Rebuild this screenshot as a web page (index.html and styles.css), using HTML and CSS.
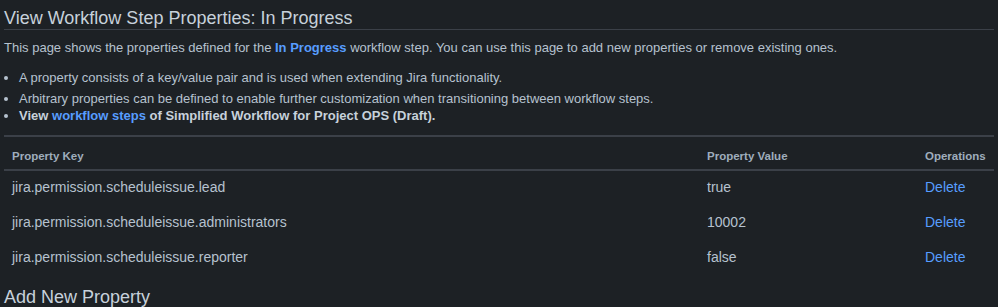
FILE: index.html
```html
<!DOCTYPE html>
<html>
<head>
  <title>View Workflow Step Properties</title>
  <meta charset="utf-8" />
  <link rel="stylesheet" href="styles.css">
</head>
<body>
  <h2 class="page-title">View Workflow Step Properties: In Progress</h2>

  <p class="intro">This page shows the properties defined for the <a href="#" class="strong-link">In Progress</a> workflow step. You can use this page to add new properties or remove existing ones.</p>

  <ul class="notes">
    <li class="first">A property consists of a key/value pair and is used when extending Jira functionality.</li>
    <li>Arbitrary properties can be defined to enable further customization when transitioning between workflow steps.</li>
    <li><b>View <a href="#">workflow steps</a> of Simplified Workflow for Project OPS (Draft).</b></li>
  </ul>

  <div class="props">
    <table class="props-table">
      <colgroup>
        <col class="col-key">
        <col class="col-value">
        <col class="col-ops">
      </colgroup>
      <thead>
        <tr>
          <th>Property Key</th>
          <th>Property Value</th>
          <th>Operations</th>
        </tr>
      </thead>
      <tbody>
        <tr>
          <td>jira.permission.scheduleissue.lead</td>
          <td>true</td>
          <td><a href="#">Delete</a></td>
        </tr>
        <tr>
          <td>jira.permission.scheduleissue.administrators</td>
          <td>10002</td>
          <td><a href="#">Delete</a></td>
        </tr>
        <tr>
          <td>jira.permission.scheduleissue.reporter</td>
          <td>false</td>
          <td><a href="#">Delete</a></td>
        </tr>
      </tbody>
    </table>
  </div>

  <h2 class="section-title">Add New Property</h2>
</body>
</html>
```

FILE: styles.css
```css
body {
  font-family: "Liberation Sans", Arial, sans-serif;
  font-size: 13px;
  line-height: 20px;
  color: #b6c2cf;
  background-color: #1d2125;
  margin: 0px;
  padding: 0px 4px;
}
a {
  color: #579dff;
  text-decoration: none;
}
.strong-link {
  font-weight: bold;
}
h2 {
  font-size: 18px;
  font-weight: normal;
  line-height: 22px;
  color: #c7d1db;
  margin: 0px;
  border-bottom: 1px solid #3b4048;
}
.page-title {
  padding-top: 7px;
}
.intro {
  margin: 8px 0px 0px;
}
.notes {
  margin: 11px 0px 0px;
  padding-left: 15px;
  line-height: 17px;
}
.notes .first {
  margin-bottom: 4px;
}
.notes b {
  color: #c7d1db;
}
.props {
  margin-top: 11px;
  border-top: 2px solid #3b4048;
}
.props-table {
  width: 100%;
  table-layout: fixed;
  border-collapse: collapse;
}
.col-key {
  width: 695px;
}
.col-value {
  width: 218px;
}
.props-table th {
  text-align: left;
  font-size: 11.5px;
  line-height: 16px;
  font-weight: bold;
  color: #9fadbc;
  padding: 11px 4px 5px 8px;
  white-space: nowrap;
  border-bottom: 2px solid #3b4048;
}
.props-table td {
  padding: 6px 4px 8px 8px;
  font-size: 14px;
  line-height: 21px;
  white-space: nowrap;
}
.section-title {
  margin-top: 9px;
  line-height: 24px;
}
```
